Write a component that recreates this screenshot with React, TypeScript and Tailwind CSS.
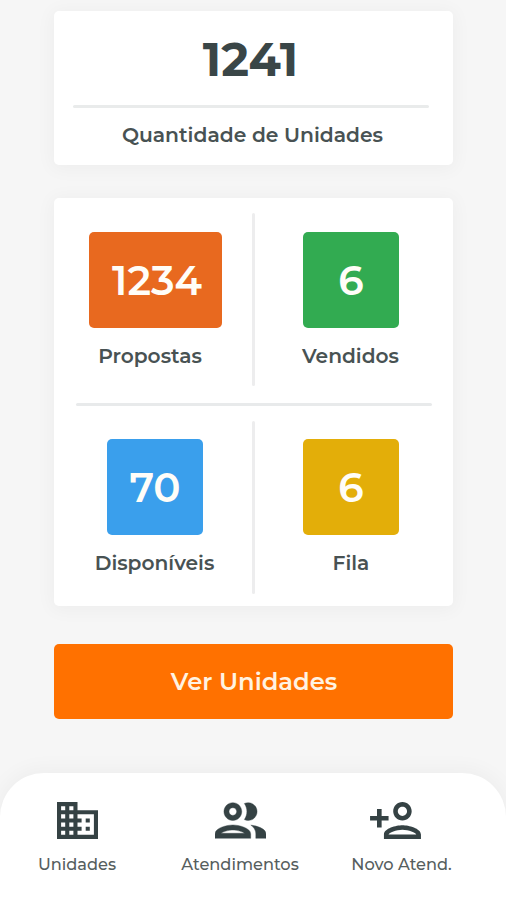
import type { ReactNode } from "react";
import clsx from "clsx";

type Stat = {
  label: string;
  value: string;
  tile: string;
  labelClass?: string;
};

const TOP_STATS: Stat[] = [
  { label: "Propostas", value: "1234", tile: "w-[133px] ml-[2px] pl-[3px] pt-[3px] bg-[#e8691f]", labelClass: "mr-[9px]" },
  { label: "Vendidos", value: "6", tile: "w-24 pt-[3px] bg-[#32ab51]", labelClass: "mr-px" },
];

const BOTTOM_STATS: Stat[] = [
  { label: "Disponíveis", value: "70", tile: "w-24 pt-[2px] pl-px bg-[#3a9fec]" },
  { label: "Fila", value: "6", tile: "w-24 pt-[2px] bg-[#e3ae09]" },
];

function StatCell({ stat }: { stat: Stat }) {
  return (
    <div className="flex w-[196px] flex-col items-center">
      <div className={clsx("flex h-24 items-center justify-center rounded-[5px]", stat.tile)}>
        <span className="text-[40.5px] leading-none font-semibold text-[#fffdf8]">{stat.value}</span>
      </div>
      <span className={clsx("mt-4 text-[20.2px] leading-6 font-semibold whitespace-nowrap", stat.labelClass)}>
        {stat.label}
      </span>
    </div>
  );
}

function StatRow({ stats, className }: { stats: Stat[]; className: string }) {
  return (
    <div className="flex h-[173px]">
      <div className={clsx("flex w-[198px] justify-center pl-[3px]", className)}>
        <StatCell stat={stats[0]} />
      </div>
      <div className="w-[3px] shrink-0 rounded-full bg-[#ededee]" />
      <div className={clsx("flex w-[198px] justify-center pr-[6px]", className)}>
        <StatCell stat={stats[1]} />
      </div>
    </div>
  );
}

function NavItem({ label, className, children }: { label: string; className: string; children: ReactNode }) {
  return (
    <a className={clsx("flex flex-col items-center", className)}>
      {children}
      <span className="mt-[15px] text-[16.2px] leading-5 font-medium whitespace-nowrap text-[#565e5e]">{label}</span>
    </a>
  );
}

export default function App() {
  return (
    <div className="flex h-[900px] w-[506px] flex-col overflow-hidden bg-[#f6f6f6] font-['Montserrat','Inter',sans-serif] text-[#485253]">
      <main className="flex h-[773px] flex-col items-center pt-[11px] pr-px pl-[2px]">
        <section className="flex h-[154px] w-[399px] flex-col items-center rounded-[5px] bg-white shadow-[0_2px_18px_3px_rgba(0,0,0,0.035)]">
          <span className="mt-[23px] mr-[6px] text-[47px] leading-[52px] font-bold text-[#3a4647]">1241</span>
          <div className="mt-[19px] mr-[5px] h-[3px] w-[356px] shrink-0 rounded-full bg-[#e9ebeb]" />
          <span className="mt-[15px] mr-[2px] text-[20.3px] leading-6 font-semibold whitespace-nowrap">
            Quantidade de Unidades
          </span>
        </section>

        <section className="mt-[33px] h-[408px] w-[399px] rounded-[5px] bg-white pt-[15px] shadow-[0_2px_18px_3px_rgba(0,0,0,0.035)]">
          <StatRow stats={TOP_STATS} className="pt-[19px]" />
          <div className="mt-[17px] mb-[15px] ml-[22px] h-[3px] w-[356px] rounded-full bg-[#e8eaeb]" />
          <StatRow stats={BOTTOM_STATS} className="pt-[18px]" />
        </section>

        <button className="mt-[38px] flex h-[75px] w-[399px] items-center justify-center rounded-[5px] bg-[#ff7100] pt-[2px] pl-px text-[24.2px] font-semibold text-[#fff3e2]">
          Ver Unidades
        </button>
      </main>

      <nav className="flex h-[127px] rounded-t-[44px] bg-white pt-[29px] shadow-[0_-2px_20px_3px_rgba(0,0,0,0.035)]">
        <NavItem label="Unidades" className="w-[154px]">
          <svg viewBox="2 3 20 18" className="h-[37px] w-[41px]" fill="#354244">
            <path d="M12 7V3H2v18h20V7H12zM6 19H4v-2h2v2zm0-4H4v-2h2v2zm0-4H4V9h2v2zm0-4H4V5h2v2zm4 12H8v-2h2v2zm0-4H8v-2h2v2zm0-4H8V9h2v2zm0-4H8V5h2v2zm10 12h-8v-2h2v-2h-2v-2h2v-2h-2V9h8v10zm-2-8h-2v2h2v-2zm0 4h-2v2h2v-2z" />
          </svg>
        </NavItem>
        <NavItem label="Atendimentos" className="w-[172px]">
          <svg viewBox="2 4.8 20 14.4" className="h-[37px] w-[51px]" fill="#354244" stroke="#354244" strokeWidth="0.15">
            <path d="M9 13.75c-2.34 0-7 1.17-7 3.5V19h14v-1.75c0-2.33-4.66-3.5-7-3.5zM4.34 17c.84-.58 2.87-1.25 4.66-1.25s3.82.67 4.66 1.25H4.34zM9 12c1.93 0 3.5-1.57 3.5-3.5S10.93 5 9 5 5.5 6.57 5.5 8.5 7.07 12 9 12zm0-5c.83 0 1.5.67 1.5 1.5S9.83 10 9 10s-1.5-.67-1.5-1.5S8.17 7 9 7zm7.04 6.81c1.16.84 1.96 1.96 1.96 3.44V19h4v-1.75c0-2.02-3.5-3.17-5.96-3.44zM15 12c1.93 0 3.5-1.57 3.5-3.5S16.93 5 15 5c-.54 0-1.04.13-1.5.35.63.89 1 1.98 1 3.15s-.37 2.26-1 3.15c.46.22.96.35 1.5.35z" />
          </svg>
        </NavItem>
        <NavItem label="Novo Atend." className="w-[151px]">
          <svg viewBox="1 4 22 16" className="mr-[12px] h-[37px] w-[51px]" fill="#354244">
            <path d="M15 12c2.21 0 4-1.79 4-4s-1.79-4-4-4-4 1.79-4 4 1.79 4 4 4zm0-6c1.1 0 2 .9 2 2s-.9 2-2 2-2-.9-2-2 .9-2 2-2zm0 8c-2.67 0-8 1.34-8 4v2h16v-2c0-2.66-5.33-4-8-4zm-6 4c.22-.72 3.31-2 6-2 2.7 0 5.8 1.29 6 2H9zM6 15v-3h3v-2H6V7H4v3H1v2h3v3z" />
          </svg>
        </NavItem>
      </nav>
    </div>
  );
}
